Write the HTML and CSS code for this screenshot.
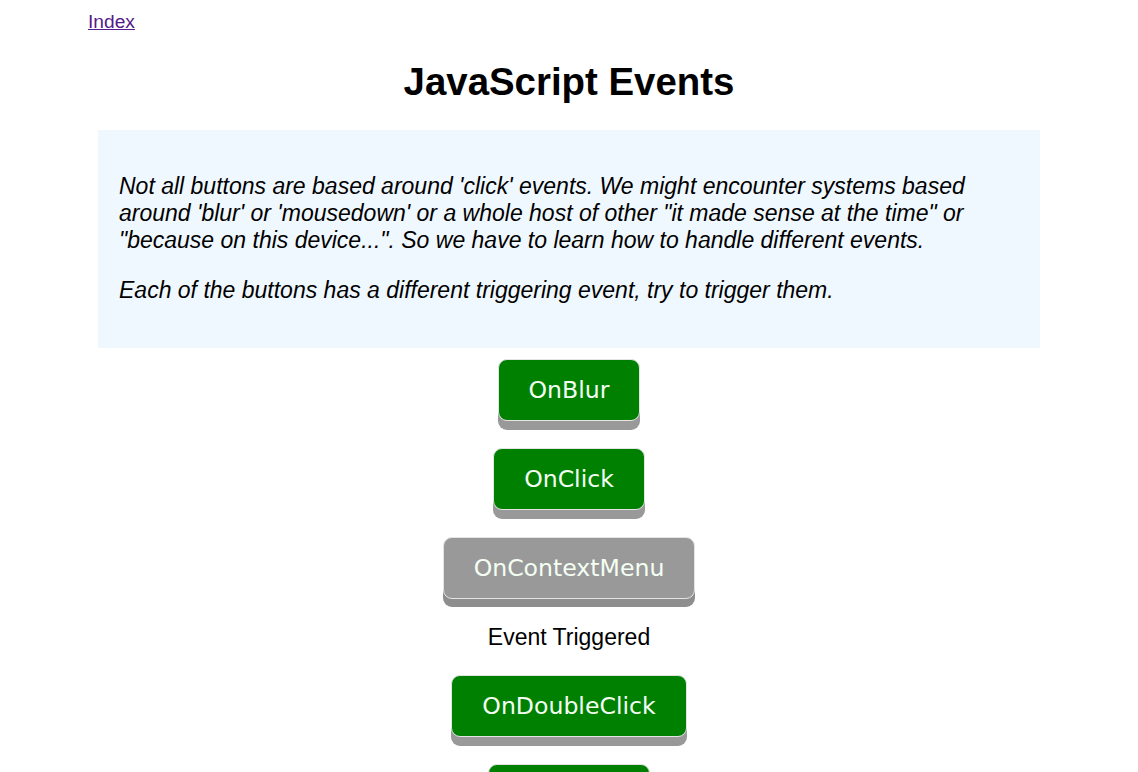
FILE: index.html
```html
<!DOCTYPE html>
<html lang="en">
<head>
    <meta charset="UTF-8">
    <meta name="viewport" content="width=device-width, initial-scale=1.0">
    <title>JavaScript Events</title>
    <link rel="stylesheet" href="styles.css">
</head>
<body>
    <div class="page">
        <a href="#" class="index-link">Index</a>
        <h1>JavaScript Events</h1>

        <!-- Explanation -->
        <div class="explanation">
            <p>Not all buttons are based around 'click' events. We might encounter systems based around 'blur' or 'mousedown' or a whole host of other "it made sense at the time" or "because on this device...". So we have to learn how to handle different events.</p>
            <p>Each of the buttons has a different triggering event, try to trigger them.</p>
        </div>

        <!-- Event buttons -->
        <div class="buttons">
            <button id="onblur" class="styled-click-button">OnBlur</button>
            <button id="onclick" class="styled-click-button">OnClick</button>
            <button id="oncontextmenu" class="styled-click-button triggered">OnContextMenu</button>
            <p class="status">Event Triggered</p>
            <button id="ondoubleclick" class="styled-click-button">OnDoubleClick</button>
            <button id="onfocus" class="styled-click-button">OnFocus</button>
        </div>
    </div>
</body>
</html>
```

FILE: styles.css
```css
body {
    font-family: "Liberation Sans", Arial, sans-serif;
    font-size: 19.2px;
    margin: 0;
    background-color: white;
    color: black;
}
.page {
    padding: 11px 88px 0 88px;
}
.index-link {
    line-height: 22px;
    color: #551a8b;
}
h1 {
    font-size: 38.4px;
    line-height: 44px;
    text-align: center;
    margin: 27px 0 26px 0;
}
.explanation {
    margin: 0 10px;
    padding: 20px 21px 21px 21px;
    background-color: aliceblue;
}
.explanation p {
    font-size: 23px;
    line-height: 27px;
    font-style: italic;
    margin: 23px 0;
}
.buttons {
    display: flex;
    flex-direction: column;
    align-items: center;
    gap: 27px;
    margin-top: 11px;
}
.styled-click-button {
    font-family: "DejaVu Sans", Verdana, sans-serif;
    font-size: 23.6px;
    line-height: 26px;
    color: #f4fff4;
    background-color: #008000;
    border: 1px solid #e4e4e4;
    border-radius: 9px;
    padding: 17px 30px;
    box-shadow: 0 9px #999;
    cursor: pointer;
}
.styled-click-button.triggered {
    background-color: #999;
    box-shadow: 0 8px #8e8e8e;
}
.status {
    font-size: 23px;
    line-height: 22px;
    margin: 0;
}
```
